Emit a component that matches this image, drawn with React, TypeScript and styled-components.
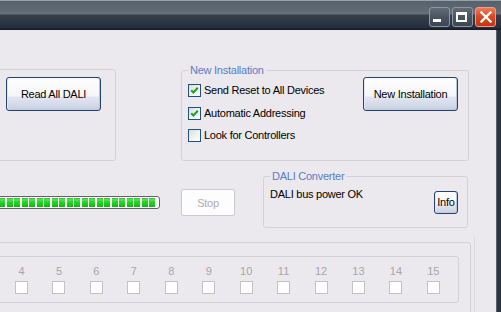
import React from 'react';
import styled, { createGlobalStyle } from 'styled-components';

const GlobalStyle = createGlobalStyle`
  *, *::before, *::after { box-sizing: border-box; }
  html, body { margin: 0; padding: 0; width: 501px; height: 312px; overflow: hidden; background: #ebe9ed; }
  body { font-family: "Liberation Sans", Arial, sans-serif; font-size: 11px; letter-spacing: -0.25px; color: #000; }
  #root { width: 501px; height: 312px; overflow: hidden; }
`;

const Window = styled.div`
  display: flex;
  flex-direction: column;
  width: 501px;
  height: 312px;
  overflow: hidden;
`;

const TitleBar = styled.div`
  flex: 0 0 30px;
  display: flex;
  justify-content: flex-end;
  align-items: flex-start;
  gap: 2px;
  padding: 7px 5px 0 0;
  background: linear-gradient(
    to bottom,
    #9ca1a9 0px, #9ca1a9 1px,
    #56616b 1px, #5d6872 9px, #66717b 14px,
    #343f4e 15px, #252d3b 28px,
    #161c28 29px, #161c28 30px
  );
`;

const CaptionButton = styled.div<{ $close?: boolean }>`
  width: 21px;
  height: 20px;
  border-radius: 3px;
  border: 1px solid ${(p) => (p.$close ? '#e9a08a' : '#8e979f')};
  background: ${(p) =>
    p.$close
      ? 'linear-gradient(to bottom, #f07a58 0%, #dc4a22 45%, #c9330f 100%)'
      : 'linear-gradient(to bottom, #5f6b76 0%, #4a5561 50%, #3c4652 100%)'};
  display: flex;
  align-items: flex-start;
  justify-content: flex-start;
  padding: ${(p) => (p.$close ? '3px 0 0 4px' : '0')};
`;

const MinGlyph = styled.div`
  width: 8px;
  height: 3px;
  margin: 11px 0 0 3px;
  background: #fff;
`;

const MaxGlyph = styled.div`
  width: 11px;
  height: 10px;
  margin: 4px 0 0 3px;
  border: 2px solid #fff;
  border-top-width: 3px;
`;

const Body = styled.div`
  flex: 1;
  display: flex;
  min-height: 0;
`;

const Client = styled.div`
  width: 496px;
  display: flex;
  flex-direction: column;
  overflow: hidden;
`;

const Frame = styled.div`
  width: 5px;
  background: linear-gradient(to right, #5a626d 0px, #5a626d 1px, #2d3542 1px, #2a323e 5px);
`;

const GroupBox = styled.div`
  position: relative;
  border: 1px solid #d3d1d6;
  border-radius: 3px;
`;

const Legend = styled.span`
  position: absolute;
  top: -7px;
  left: 6px;
  padding: 0 2px;
  line-height: 13px;
  color: #5a7cc4;
  background: #ebe9ed;
  white-space: nowrap;
`;

const TopRow = styled.div`
  display: flex;
  align-items: flex-start;
  margin-top: 39px;
  height: 92px;
`;

const ReadGroup = styled(GroupBox)`
  width: 200px;
  height: 92px;
  margin-left: -84px;
  display: flex;
  justify-content: flex-end;
  align-items: flex-start;
  padding: 7px 14px 0 0;
`;

const InstallGroup = styled(GroupBox)`
  width: 288px;
  height: 91px;
  margin: 1px 0 0 65px;
  display: flex;
  justify-content: space-between;
  align-items: flex-start;
  padding: 6px 10px 0 6px;
`;

const XPButton = styled.button<{ $w: number; $h: number }>`
  width: ${(p) => p.$w}px;
  height: ${(p) => p.$h}px;
  padding: 0;
  border: 1px solid #23426f;
  border-radius: 3px;
  font-family: inherit;
  font-size: 11px;
  letter-spacing: -0.25px;
  color: #000;
  line-height: 13px;
  background: linear-gradient(
    to bottom,
    #ffffff 0%, #f6f6f9 55%, #e2e6f0 60%, #cfd6e6 90%, #c3cbdf 100%
  );
  box-shadow: inset 1px 0 0 #e4e8f4, inset -1px 0 0 #b9c3dc;
  white-space: nowrap;
  overflow: visible;
`;

const DisabledButton = styled.button`
  width: 54px;
  height: 27px;
  margin: 28px 0 0 21px;
  padding: 0;
  border: 1px solid #cbc9cf;
  border-radius: 2px;
  background: #fdfdfd;
  font-family: inherit;
  font-size: 11px;
  letter-spacing: -0.25px;
  color: #aeadb2;
`;

const CheckList = styled.div`
  margin-top: 7px;
  display: grid;
  grid-template-rows: 23px 22px 13px;
`;

const CheckRow = styled.label`
  display: flex;
  align-items: flex-start;
  gap: 3px;
  line-height: 13px;
  white-space: nowrap;
`;

const Box = styled.span<{ $disabled?: boolean }>`
  width: 13px;
  height: 13px;
  flex: 0 0 13px;
  display: flex;
  align-items: center;
  justify-content: center;
  border: 1px solid ${(p) => (p.$disabled ? '#c3c2c7' : '#1c5180')};
  background: ${(p) =>
    p.$disabled ? '#ffffff' : 'linear-gradient(135deg, #dcdcd7 0%, #f4f4f1 60%, #ffffff 100%)'};
`;

const MidRow = styled.div`
  display: flex;
  align-items: flex-start;
  height: 67px;
`;

const Progress = styled.div`
  width: 260px;
  height: 13px;
  margin: 35px 0 0 -100px;
  border: 1px solid #636367;
  border-radius: 3px;
  background: #fff;
  padding: 1px 2px 1px 1px;
`;

const ProgressFill = styled.div`
  height: 100%;
  background:
    repeating-linear-gradient(to right, transparent 0px, transparent 6px, #ffffff 6px, #ffffff 7.5px),
    linear-gradient(to bottom, #35b535 0%, #5fe05f 20%, #1ed81e 45%, #14cc14 75%, #23a823 100%);
`;

const ConverterGroup = styled(GroupBox)`
  width: 205px;
  height: 52px;
  margin: 15px 0 0 28px;
  display: flex;
  justify-content: space-between;
  align-items: flex-start;
  padding: 11px 9px 0 6px;
`;

const StatusText = styled.span`
  line-height: 13px;
  white-space: nowrap;
`;

const InfoWrap = styled.div`
  margin-top: 3px;
`;

const BottomArea = styled.div`
  flex: 1;
  display: flex;
  align-items: flex-start;
  margin-top: 8px;
`;

const OuterGroup = styled(GroupBox)`
  width: 631px;
  height: 120px;
  margin: 6px 0 0 -160px;
  flex: 0 0 631px;
  padding: 13px 0 0 11px;
`;

const InnerGroup = styled(GroupBox)`
  width: 607px;
  height: 47px;
  padding: 8px 0 0 149.8px;
  display: grid;
  grid-template-columns: repeat(12, 37.45px);
`;

const Channel = styled.div`
  display: flex;
  flex-direction: column;
  align-items: center;
  gap: 3px;
`;

const ChannelLabel = styled.span`
  line-height: 13px;
  color: #a7a6ab;
  letter-spacing: 0;
`;

const SidePanel = styled.div`
  flex: 1;
  align-self: stretch;
  margin-left: 3px;
  border-left: 1px solid #dcdbe0;
`;

const CheckMark = () => (
  <svg width="9" height="9" viewBox="0 0 9 9">
    <path d="M1.2 4.2 L3.4 6.5 L7.8 1.8" fill="none" stroke="#21a121" strokeWidth="2" />
  </svg>
);

const CloseGlyph = () => (
  <svg width="12" height="12" viewBox="0 0 12 12">
    <path d="M1.5 1.5 L10.5 10.5 M10.5 1.5 L1.5 10.5" stroke="#fff" strokeWidth="2.4" strokeLinecap="square" />
  </svg>
);

const Check = ({ checked, children }: { checked?: boolean; children: React.ReactNode }) => (
  <CheckRow>
    <Box>{checked ? <CheckMark /> : null}</Box>
    <span>{children}</span>
  </CheckRow>
);

export default function App() {
  const channels = Array.from({ length: 12 }, (_, i) => i + 4);
  return (
    <>
      <GlobalStyle />
      <Window>
        <TitleBar>
          <CaptionButton>
            <MinGlyph />
          </CaptionButton>
          <CaptionButton>
            <MaxGlyph />
          </CaptionButton>
          <CaptionButton $close>
            <CloseGlyph />
          </CaptionButton>
        </TitleBar>
        <Body>
          <Client>
            <TopRow>
              <ReadGroup>
                <XPButton $w={95} $h={34}>Read All DALI</XPButton>
              </ReadGroup>
              <InstallGroup>
                <Legend>New Installation</Legend>
                <CheckList>
                  <Check checked>Send Reset to All Devices</Check>
                  <Check checked>Automatic Addressing</Check>
                  <Check>Look for Controllers</Check>
                </CheckList>
                <XPButton $w={95} $h={34}>New Installation</XPButton>
              </InstallGroup>
            </TopRow>
            <MidRow>
              <Progress>
                <ProgressFill />
              </Progress>
              <DisabledButton disabled>Stop</DisabledButton>
              <ConverterGroup>
                <Legend>DALI Converter</Legend>
                <StatusText>DALI bus power OK</StatusText>
                <InfoWrap>
                  <XPButton $w={24} $h={23}>Info</XPButton>
                </InfoWrap>
              </ConverterGroup>
            </MidRow>
            <BottomArea>
              <OuterGroup>
                <InnerGroup>
                  {channels.map((n) => (
                    <Channel key={n}>
                      <ChannelLabel>{n}</ChannelLabel>
                      <Box $disabled />
                    </Channel>
                  ))}
                </InnerGroup>
              </OuterGroup>
              <SidePanel />
            </BottomArea>
          </Client>
          <Frame />
        </Body>
      </Window>
    </>
  );
}
